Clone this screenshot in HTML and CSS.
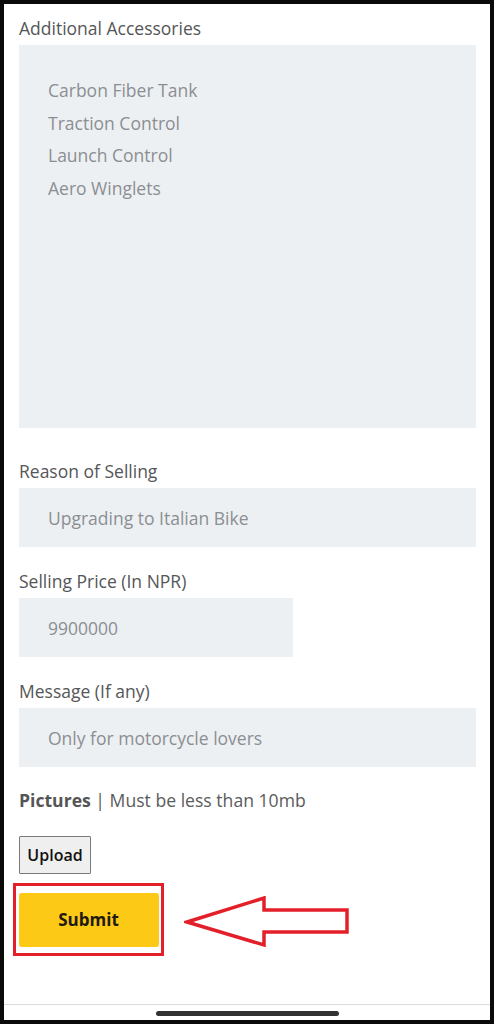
FILE: index.html
```html
<!DOCTYPE html>
<html lang="en">
<head>
<meta charset="utf-8">
<title>Sell form</title>
<link rel="stylesheet" href="styles.css">
</head>
<body>
<div class="frame">
  <form class="form">
    <div class="field field-accessories">
      <label class="label">Additional Accessories</label>
      <div class="textarea">
        <div>Carbon Fiber Tank</div>
        <div>Traction Control</div>
        <div>Launch Control</div>
        <div>Aero Winglets</div>
      </div>
    </div>
    <div class="field">
      <label class="label">Reason of Selling</label>
      <div class="input">Upgrading to Italian Bike</div>
    </div>
    <div class="field">
      <label class="label">Selling Price (In NPR)</label>
      <div class="input input-short">9900000</div>
    </div>
    <div class="field field-last">
      <label class="label">Message (If any)</label>
      <div class="input">Only for motorcycle lovers</div>
    </div>
    <div class="pictures"><b>Pictures</b> | Must be less than 10mb</div>
    <button type="button" class="upload">Upload</button>
    <div class="submit-row">
      <div class="highlight">
        <button type="button" class="submit">Submit</button>
      </div>
      <svg class="arrow" width="166" height="52" viewBox="0 0 166 52">
        <polygon points="3,26 80,2 80,14 163,14 163,36 80,36 80,49" fill="#fff" stroke="#e3202a" stroke-width="3.5" stroke-linejoin="miter"/>
      </svg>
    </div>
  </form>
  <div class="bottom-bar">
    <div class="home-indicator"></div>
  </div>
</div>
</body>
</html>
```

FILE: styles.css
```css
* { box-sizing: border-box; }
html, body { margin: 0; padding: 0; background: #000; }
body {
  font-family: "Open Sans", "Noto Sans", sans-serif;
  width: 494px;
  height: 1024px;
}
.frame {
  width: 494px;
  height: 1024px;
  border: 4px solid #0a0a0a;
  background: #fff;
  display: flex;
  flex-direction: column;
}
.form {
  flex: 1;
  padding: 12px 14px 0 15px;
  position: relative;
}
.field { display: flex; flex-direction: column; margin-bottom: 22px; }
.field-accessories { margin-bottom: 31px; }
.field-last { margin-bottom: 21px; }
.label {
  font-size: 17.5px;
  line-height: 24px;
  color: #555657;
  margin-bottom: 5px;
}
.textarea {
  background: #edf0f3;
  height: 383px;
  padding: 29px 0 0 29px;
  font-size: 17.5px;
  line-height: 32.5px;
  color: #8b8e92;
}
.input {
  background: #edf0f3;
  height: 59px;
  padding-left: 29px;
  display: flex;
  align-items: center;
  font-size: 17.5px;
  color: #8b8e92;
}
.input-short { width: 274px; }
.pictures {
  font-size: 17.6px;
  line-height: 24px;
  color: #5a5b5c;
}
.pictures b { font-weight: 700; color: #555; }
.upload {
  margin-top: 24px;
  display: block;
  width: 72px;
  height: 38px;
  background: #efefef;
  border: 1px solid #7a7a7a;
  border-radius: 1px;
  font-family: "Open Sans", sans-serif;
  font-size: 16px;
  font-weight: 600;
  color: #111;
  padding: 0;
}
.submit-row {
  margin-top: 9px;
  margin-left: -6px;
  position: relative;
  height: 74px;
}
.highlight {
  display: inline-block;
  border: 3.5px solid #e3202a;
  padding: 6.5px 2.5px;
}
.submit {
  display: block;
  width: 140px;
  height: 54px;
  background: #fcc917;
  border: none;
  border-radius: 3px;
  font-family: "Open Sans", sans-serif;
  font-size: 17px;
  font-weight: 700;
  color: #1e1a10;
  padding: 0;
}
.arrow {
  position: absolute;
  left: 171px;
  top: 13px;
}
.bottom-bar {
  height: 16px;
  border-top: 1px solid #dcdcdc;
  display: flex;
  justify-content: center;
  align-items: flex-end;
  padding-bottom: 4px;
}
.home-indicator {
  width: 183px;
  height: 5px;
  border-radius: 3px;
  background: #333;
}
```
